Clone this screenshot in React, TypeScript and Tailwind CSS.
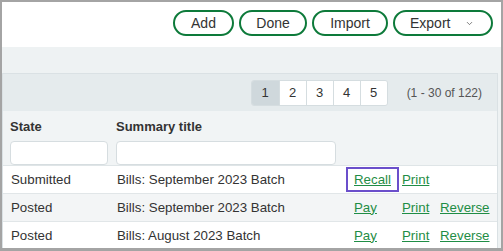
import { ChevronDown } from "lucide-react";

const rows = [
  { state: "Submitted", title: "Bills: September 2023 Batch", first: "Recall", reverse: false },
  { state: "Posted", title: "Bills: September 2023 Batch", first: "Pay", reverse: true },
  { state: "Posted", title: "Bills: August 2023 Batch", first: "Pay", reverse: true },
];

function PillButton({ label, width }: { label: string; width: string }) {
  return (
    <button
      className={`${width} h-[26px] rounded-full border-2 border-[#0d7a3a] bg-white text-[14px] text-[#333] flex items-center justify-center`}
    >
      {label}
    </button>
  );
}

export default function App() {
  return (
    <div className="w-[503px] h-[251px] overflow-hidden border-2 border-b-[3px] border-[#a4a4a4] bg-[#eef2f3] font-['Liberation_Sans',Arial,sans-serif]">
      {/* toolbar */}
      <div className="h-[45px] bg-white flex justify-end items-start gap-[5px] pt-[8px] pr-[8px]">
        <PillButton label="Add" width="w-[61px]" />
        <PillButton label="Done" width="w-[68px]" />
        <PillButton label="Import" width="w-[76px]" />
        <button className="w-[100px] h-[26px] rounded-full border-2 border-[#0d7a3a] bg-white text-[14px] text-[#333] flex items-center pl-[15px] pr-[17px]">
          <span>Export</span>
          <ChevronDown className="ml-auto w-[9px] h-[9px] text-[#555]" strokeWidth={2} />
        </button>
      </div>

      <div className="pt-[26px] pr-[3px]">
        <div className="border border-b-0 border-[#dae1e4] bg-white">
          {/* pagination */}
          <div className="h-[37px] bg-[#e5ebed] flex items-center justify-end pr-[15px]">
            <div className="flex h-[26px] rounded-[3px] border border-[#d5dde0] overflow-hidden">
              {[1, 2, 3, 4, 5].map((n) => (
                <div
                  key={n}
                  className={`w-[27px] flex items-center justify-center text-[13px] text-[#333] border-l border-[#d5dde0] first:border-l-0 ${
                    n === 1 ? "bg-[#cfd8dc]" : "bg-white"
                  }`}
                >
                  {n}
                </div>
              ))}
            </div>
            <span className="ml-[19px] text-[12px] text-[#555]">(1 - 30 of 122)</span>
          </div>

          {/* filters */}
          <div className="h-[55px] bg-[#f1f4f5] flex pl-[7px] pt-[8px] border-b border-[#dfe5e7]">
            <div className="w-[106px]">
              <div className="text-[13px] font-bold text-[#333] leading-[16px]">State</div>
              <div className="mt-[6px] w-[98px] h-[24px] rounded-[4px] border border-[#d6dde0] bg-white" />
            </div>
            <div>
              <div className="text-[13px] font-bold text-[#333] leading-[16px]">Summary title</div>
              <div className="mt-[6px] w-[220px] h-[24px] rounded-[4px] border border-[#d6dde0] bg-white" />
            </div>
          </div>

          {/* rows */}
          {rows.map((r, i) => (
            <div
              key={i}
              className={`h-[28px] flex items-center pl-[8px] text-[13.3px] text-[#333] border-b border-[#e1e6e8] ${
                i === 1 ? "bg-[#f3f5f6]" : "bg-white"
              }`}
            >
              <div className="w-[106px]">{r.state}</div>
              <div className="w-[229px]">{r.title}</div>
              <div className="w-[56px]">
                {r.first === "Recall" ? (
                  <a className="inline-flex items-center h-[25px] px-[6px] border-2 border-[#6b4fcb] text-[#1f8d45] underline">
                    Recall
                  </a>
                ) : (
                  <a className="pl-[8px] text-[#1f8d45] underline">{r.first}</a>
                )}
              </div>
              <div className="w-[38px]">
                <a className="text-[#1f8d45] underline">Print</a>
              </div>
              {r.reverse && (
                <div>
                  <a className="text-[#1f8d45] underline">Reverse</a>
                </div>
              )}
            </div>
          ))}
        </div>
      </div>
    </div>
  );
}
